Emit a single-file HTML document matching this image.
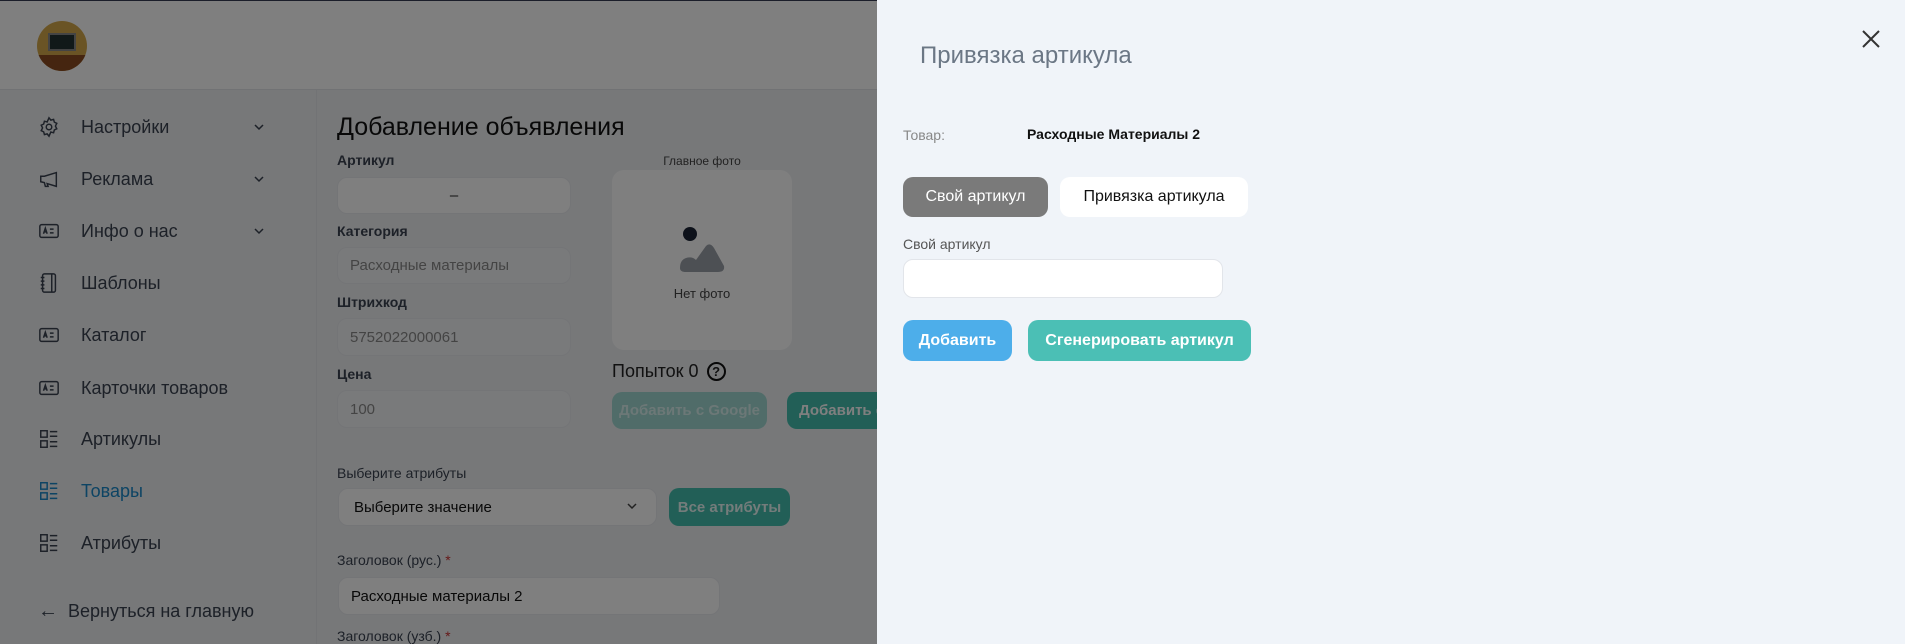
<!DOCTYPE html>
<html><head><meta charset="utf-8"><style>
*{box-sizing:border-box;margin:0;padding:0}
body{width:1905px;height:644px;overflow:hidden;font-family:"Liberation Sans",sans-serif;background:#eef0f3;position:relative}
.abs{position:absolute;white-space:nowrap}
.hdr{left:0;top:0;width:1905px;height:90px;background:#fff;border-bottom:1px solid #e2e4e8}
.side{left:0;top:90px;width:317px;height:554px;border-right:1px solid #e4e6ea}
.item{left:38px;height:24px;display:flex;align-items:center;font-size:18px;color:#3a4250}
.item svg{width:22px;height:22px;margin-right:21px}
.chev{left:252px;width:14px;height:14px}
.lbl{font-size:14px;color:#3a4250;font-weight:bold}
.inp{background:#fff;border-radius:10px;border:1px solid #e8eaee;font-size:15px;color:#888;display:flex;align-items:center;padding-left:12px}
.ov{left:0;top:0;width:877px;height:644px;background:rgba(0,0,0,0.5)}
.panel{left:877px;top:0;width:1028px;height:644px;background:#f0f4f9}
.btn{border-radius:10px;display:flex;align-items:center;justify-content:center;font-size:16px}
</style></head><body>
<div class="abs hdr"></div>
<div class="abs" style="left:37px;top:21px;width:50px;height:50px;border-radius:50%;background:#d4a94a;overflow:hidden"><div class="abs" style="left:11px;top:12px;width:28px;height:18px;background:#233;border:2px solid #888"></div><div class="abs" style="left:0;top:34px;width:50px;height:16px;background:#8a4a20"></div></div>
<div class="abs side"></div>

<div class="abs item" style="top:115px"><svg viewBox="0 0 24 24" fill="none" stroke="#3a4250" stroke-width="1.6"><circle cx="12" cy="12" r="3"/><path d="M12 2l2 2.5 3-.8.8 3L20.5 8 19 11l1.5 3-2.7 1.3-.8 3-3-.8L12 22l-2-2.5-3 .8-.8-3L3.5 16 5 13 3.5 10l2.7-1.3.8-3 3 .8z"/></svg>Настройки</div>
<div class="abs item" style="top:167px"><svg viewBox="0 0 24 24" fill="none" stroke="#3a4250" stroke-width="1.6"><path d="M3 9v6l4 1 1 4h3l-1-3 10 3V5L7 9z"/></svg>Реклама</div>
<div class="abs item" style="top:219px"><svg viewBox="0 0 24 24" fill="none" stroke="#3a4250" stroke-width="1.6"><rect x="2" y="5" width="20" height="14" rx="2"/><path d="M6 15l2-6 2 6M7 13h2M13 10h4M13 14h4"/></svg>Инфо о нас</div>
<div class="abs item" style="top:271px"><svg viewBox="0 0 24 24" fill="none" stroke="#3a4250" stroke-width="1.6"><rect x="5" y="2" width="14" height="20" rx="2"/><path d="M3 6h4M3 10h4M3 14h4M3 18h4M15 2v20"/></svg>Шаблоны</div>
<div class="abs item" style="top:323px"><svg viewBox="0 0 24 24" fill="none" stroke="#3a4250" stroke-width="1.6"><rect x="2" y="5" width="20" height="14" rx="2"/><path d="M6 15l2-6 2 6M7 13h2M13 10h4M13 14h4"/></svg>Каталог</div>
<div class="abs item" style="top:376px"><svg viewBox="0 0 24 24" fill="none" stroke="#3a4250" stroke-width="1.6"><rect x="2" y="5" width="20" height="14" rx="2"/><path d="M6 15l2-6 2 6M7 13h2M13 10h4M13 14h4"/></svg>Карточки товаров</div>
<div class="abs item" style="top:427px"><svg viewBox="0 0 24 24" fill="none" stroke="#3a4250" stroke-width="1.6"><rect x="3" y="3" width="7" height="7"/><rect x="3" y="14" width="7" height="7"/><path d="M13 4h8M13 9h8M13 15h8M13 20h8"/></svg>Артикулы</div>
<div class="abs item" style="top:479px;color:#1a88c8"><svg viewBox="0 0 24 24" fill="none" stroke="#1a88c8" stroke-width="1.6"><rect x="3" y="3" width="7" height="7"/><rect x="3" y="14" width="7" height="7"/><path d="M13 4h8M13 9h8M13 15h8M13 20h8"/></svg>Товары</div>
<div class="abs item" style="top:531px"><svg viewBox="0 0 24 24" fill="none" stroke="#3a4250" stroke-width="1.6"><rect x="3" y="3" width="7" height="7"/><rect x="3" y="14" width="7" height="7"/><path d="M13 4h8M13 9h8M13 15h8M13 20h8"/></svg>Атрибуты</div>
<svg class="abs chev" style="top:120px" viewBox="0 0 14 14" fill="none" stroke="#3a4250" stroke-width="1.5"><path d="M3 5l4 4 4-4"/></svg>
<svg class="abs chev" style="top:172px" viewBox="0 0 14 14" fill="none" stroke="#3a4250" stroke-width="1.5"><path d="M3 5l4 4 4-4"/></svg>
<svg class="abs chev" style="top:224px" viewBox="0 0 14 14" fill="none" stroke="#3a4250" stroke-width="1.5"><path d="M3 5l4 4 4-4"/></svg>
<div class="abs" style="left:38px;top:600px;font-size:18px;color:#3a4250;display:flex;align-items:center"><span style="font-size:20px;margin-right:10px">←</span>Вернуться на главную</div>

<div class="abs" style="left:337px;top:113px;font-size:25px;color:#111">Добавление объявления</div>
<div class="abs lbl" style="left:337px;top:152px">Артикул</div>
<div class="abs inp" style="left:337px;top:177px;width:234px;height:37px;justify-content:center;padding:0;color:#222">–</div>
<div class="abs lbl" style="left:337px;top:223px">Категория</div>
<div class="abs inp" style="left:337px;top:247px;width:234px;height:37px;background:#f3f4f6">Расходные материалы</div>
<div class="abs lbl" style="left:337px;top:294px">Штрихкод</div>
<div class="abs inp" style="left:337px;top:318px;width:234px;height:38px;background:#f3f4f6">5752022000061</div>
<div class="abs lbl" style="left:337px;top:366px">Цена</div>
<div class="abs inp" style="left:337px;top:390px;width:234px;height:38px;background:#f3f4f6">100</div>

<div class="abs" style="left:612px;top:154px;width:180px;text-align:center;font-size:12px;color:#444">Главное фото</div>
<div class="abs" style="left:612px;top:170px;width:180px;height:180px;background:#fff;border-radius:12px"></div>
<div class="abs" style="left:683px;top:227px;width:14px;height:14px;border-radius:50%;background:#1b2234"></div>
<svg class="abs" style="left:678px;top:238px" width="48" height="36" viewBox="0 0 48 36"><path d="M2 30 Q2 22 8 20 Q14 18 18 22 L28 8 Q32 4 36 10 L46 28 Q47 34 40 34 H8 Q2 34 2 30z" fill="#9aa0a8"/></svg>
<div class="abs" style="left:612px;top:286px;width:180px;text-align:center;font-size:13px;color:#444">Нет фото</div>
<div class="abs" style="left:612px;top:361px;font-size:18px;color:#222;display:flex;align-items:center">Попыток 0 <span style="display:inline-block;width:19px;height:19px;border:2px solid #111;border-radius:50%;font-size:13px;text-align:center;line-height:15px;margin-left:8px;font-weight:bold">?</span></div>
<div class="abs btn" style="left:612px;top:392px;width:155px;height:37px;background:#a0d8d2;color:#d8f0ee;font-weight:bold;font-size:15px">Добавить с Google</div>
<div class="abs btn" style="left:787px;top:392px;width:120px;height:37px;background:#45bfae;color:#fff;font-weight:bold;font-size:15px;justify-content:flex-start;padding-left:12px;overflow:hidden">Добавить фото</div>

<div class="abs lbl" style="left:337px;top:465px;font-weight:normal">Выберите атрибуты</div>
<div class="abs inp" style="left:338px;top:488px;width:319px;height:38px;color:#111;padding-left:15px">Выберите значение</div>
<svg class="abs" style="left:625px;top:499px" width="14" height="14" viewBox="0 0 14 14" fill="none" stroke="#444" stroke-width="1.5"><path d="M3 5l4 4 4-4"/></svg>
<div class="abs btn" style="left:669px;top:488px;width:121px;height:38px;background:#45bfae;color:#e8f8f6;font-weight:bold;font-size:15px">Все атрибуты</div>
<div class="abs lbl" style="left:337px;top:552px;font-weight:normal">Заголовок (рус.) <span style="color:#c33">*</span></div>
<div class="abs inp" style="left:338px;top:577px;width:382px;height:38px;color:#111">Расходные материалы 2</div>
<div class="abs lbl" style="left:337px;top:628px;font-weight:normal">Заголовок (узб.) <span style="color:#c33">*</span></div>

<div class="abs ov"></div>
<div class="abs" style="left:0;top:0;width:1905px;height:1px;background:#1b1e2a"></div>

<div class="abs panel">
<div class="abs" style="left:43px;top:42px;font-size:24px;color:#6b7785">Привязка артикула</div>
<svg class="abs" style="left:984px;top:29px" width="20" height="20" viewBox="0 0 20 20" stroke="#333" stroke-width="2"><path d="M2 2l16 16M18 2L2 18"/></svg>
<div class="abs" style="left:26px;top:127px;font-size:14px;color:#888">Товар:</div>
<div class="abs" style="left:150px;top:126px;font-size:14px;color:#111;font-weight:bold">Расходные Материалы 2</div>
<div class="abs btn" style="left:26px;top:177px;width:145px;height:40px;background:#7a7a7a;color:#fff">Свой артикул</div>
<div class="abs btn" style="left:183px;top:177px;width:188px;height:40px;background:#fff;color:#111">Привязка артикула</div>
<div class="abs" style="left:26px;top:236px;font-size:14px;color:#555">Свой артикул</div>
<div class="abs" style="left:26px;top:259px;width:320px;height:39px;background:#fff;border:1px solid #e2e5ea;border-radius:10px"></div>
<div class="abs btn" style="left:26px;top:320px;width:109px;height:41px;background:#4daeea;color:#fff;font-weight:bold">Добавить</div>
<div class="abs btn" style="left:151px;top:320px;width:223px;height:41px;background:#4bbfb5;color:#fff;font-weight:bold">Сгенерировать артикул</div>
</div>
</body></html>
